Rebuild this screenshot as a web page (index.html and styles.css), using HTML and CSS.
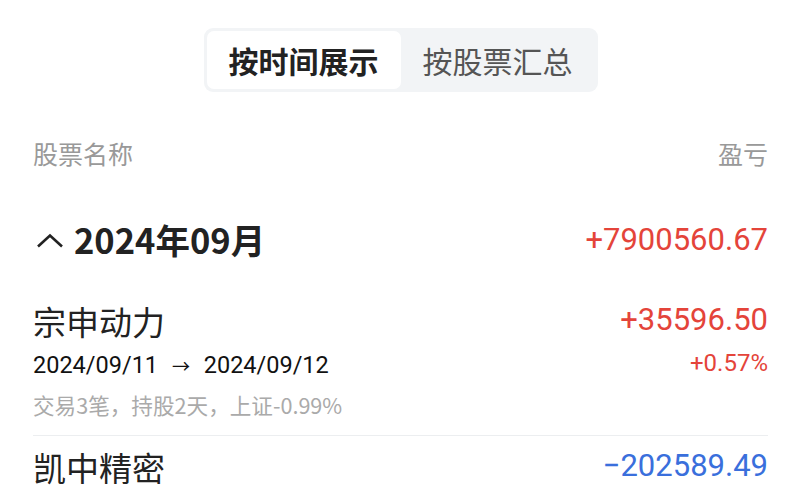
FILE: index.html
```html
<!DOCTYPE html>
<html>
<head>
  <meta charset="UTF-8">
  <title>盈亏明细</title>
  <meta name="viewport" content="width=device-width, initial-scale=1.0">
  <link rel="stylesheet" href="styles.css">
</head>
<body>
  <!-- Tab switcher -->
  <div class="tabs">
    <div class="tab active">按时间展示</div>
    <div class="tab">按股票汇总</div>
  </div>

  <div class="list-head">
    <span>股票名称</span>
    <span>盈亏</span>
  </div>

  <!-- Month group -->
  <div class="month-row">
    <div class="month-title">
      <svg class="caret" width="28" height="15" viewBox="0 0 28 15">
        <polyline points="2,13.5 14,2.5 26,13.5" fill="none" stroke="#222" stroke-width="2.6" stroke-linejoin="miter"/>
      </svg>
      <span>2024年09月</span>
    </div>
    <div class="num up">+7900560.67</div>
  </div>

  <div class="stock-row">
    <div class="stock-left">
      <div class="stock-name">宗申动力</div>
      <div class="stock-dates">2024/09/11 <span class="arrow">→</span> 2024/09/12</div>
      <div class="stock-info">交易3笔，持股2天，上证-0.99%</div>
    </div>
    <div class="stock-right">
      <div class="num up">+35596.50</div>
      <div class="pct up">+0.57%</div>
    </div>
  </div>

  <div class="stock-row">
    <div class="stock-left">
      <div class="stock-name">凯中精密</div>
      <div class="stock-dates">2024/09/02 <span class="arrow">→</span> 2024/09/10</div>
      <div class="stock-info">交易4笔，持股8天，上证-3.12%</div>
    </div>
    <div class="stock-right">
      <div class="num down">−202589.49</div>
      <div class="pct down">−5.21%</div>
    </div>
  </div>
</body>
</html>
```

FILE: styles.css
```css
/* Global Styles */
body {
  font-family: "Noto Sans CJK SC", "Noto Sans", sans-serif;
  margin: 0;
  padding: 28px 32px 0 33px;
  background-color: #fff;
  color: #222;
}
/* Tabs */
.tabs {
  display: flex;
  width: 394px;
  height: 64px;
  margin: 0 auto;
  padding: 3px;
  box-sizing: border-box;
  background-color: #f2f4f6;
  border-radius: 9px;
}
.tab {
  flex: 1;
  display: flex;
  align-items: center;
  justify-content: center;
  font-size: 30px;
  color: #555;
  border-radius: 7px;
}
.tab.active {
  background-color: #fff;
  color: #222;
  font-weight: bold;
}
/* List header */
.list-head {
  display: flex;
  justify-content: space-between;
  margin-top: 44px;
  font-size: 25px;
  line-height: 34px;
  color: #999;
}
/* Month row */
.month-row {
  display: flex;
  justify-content: space-between;
  align-items: center;
  height: 56px;
  margin: 41px 0 23px;
}
.month-title {
  display: flex;
  align-items: center;
  font-size: 34.5px;
  font-weight: bold;
}
.caret {
  margin: 2px 10px 0 3px;
}
.num {
  font-family: Roboto, "Noto Sans", sans-serif;
  font-size: 31px;
}
.up {
  color: #e4443a;
}
.down {
  color: #3a6fdc;
}
/* Stock rows */
.stock-row {
  display: flex;
  justify-content: space-between;
  padding: 8px 0 13px;
  border-bottom: 1px solid #eceef0;
}
.stock-name {
  font-size: 33px;
  line-height: 46px;
}
.stock-dates {
  font-family: Roboto, "Noto Sans CJK SC", sans-serif;
  font-size: 23.5px;
  line-height: 42px;
  color: #111;
}
.arrow {
  font-size: 18px;
  margin: 0 8px;
}
.stock-info {
  font-size: 21.6px;
  line-height: 34px;
  color: #aaa;
}
.stock-right {
  text-align: right;
}
.stock-right .num {
  line-height: 44px;
}
.pct {
  font-family: Roboto, "Noto Sans", sans-serif;
  font-size: 24px;
  line-height: 42px;
}
```
